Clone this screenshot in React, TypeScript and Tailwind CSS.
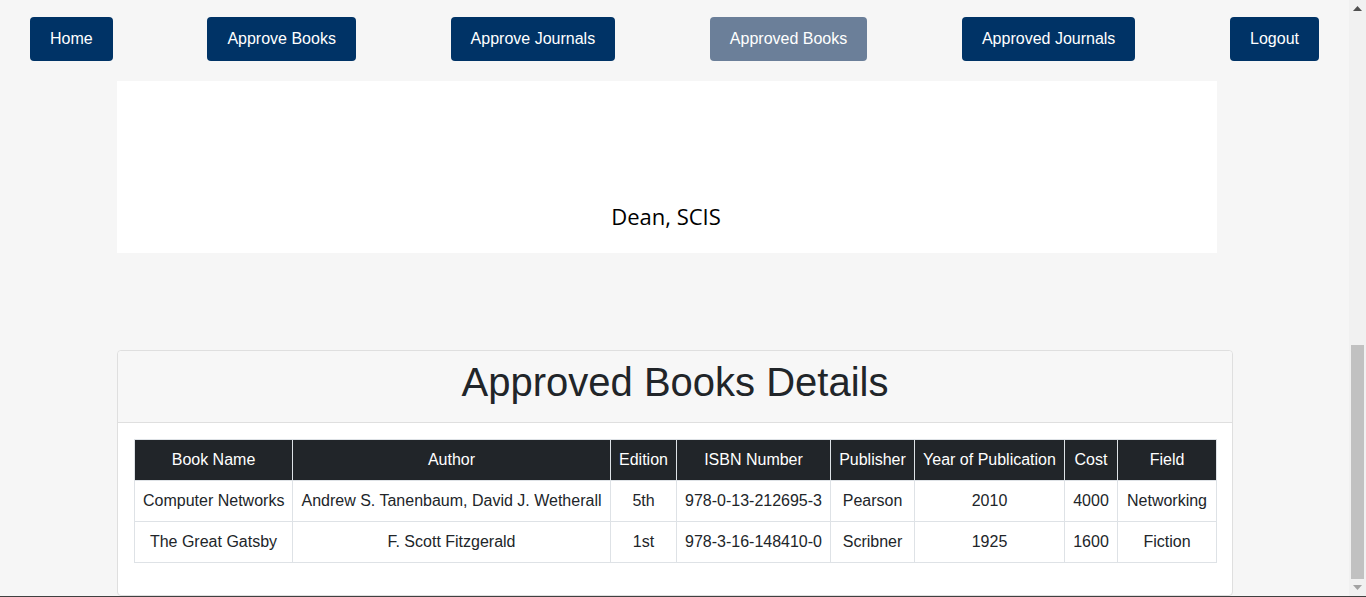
const navItems = [
  { label: 'Home', active: false },
  { label: 'Approve Books', active: false },
  { label: 'Approve Journals', active: false },
  { label: 'Approved Books', active: true },
  { label: 'Approved Journals', active: false },
  { label: 'Logout', active: false },
];

const columns = [
  { title: 'Book Name', width: 'w-[158px]' },
  { title: 'Author', width: 'w-[318px]' },
  { title: 'Edition', width: 'w-[66px]' },
  { title: 'ISBN Number', width: 'w-[154px]' },
  { title: 'Publisher', width: 'w-[84px]' },
  { title: 'Year of Publication', width: 'w-[150px]' },
  { title: 'Cost', width: 'w-[53px]' },
  { title: 'Field', width: 'w-[99px]' },
];

const books = [
  ['Computer Networks', 'Andrew S. Tanenbaum, David J. Wetherall', '5th', '978-0-13-212695-3', 'Pearson', '2010', '4000', 'Networking'],
  ['The Great Gatsby', 'F. Scott Fitzgerald', '1st', '978-3-16-148410-0', 'Scribner', '1925', '1600', 'Fiction'],
];

const Scrollbar = () => (
  <div className="w-[17px] h-full bg-[#f1f1f1] flex flex-col">
    <div className="h-[17px] flex items-center justify-center">
      <svg width="9" height="5" viewBox="0 0 9 5">
        <path d="M0 5 L4.5 0 L9 5 Z" fill="#505050" />
      </svg>
    </div>
    <div className="flex-1 flex flex-col justify-end px-[2px]">
      <div className="h-[234px] bg-[#c1c1c1]" />
    </div>
    <div className="h-[17px] flex items-center justify-center">
      <svg width="9" height="5" viewBox="0 0 9 5">
        <path d="M0 0 L9 0 L4.5 5 Z" fill="#a3a3a3" />
      </svg>
    </div>
  </div>
);

const App = () => {
  return (
    <div className="w-[1366px] h-[597px] flex flex-col overflow-hidden" style={{ fontFamily: '"Liberation Sans", Arial, sans-serif' }}>
      <div className="flex h-[596px]">
        <div className="w-[1349px] h-full bg-[#f6f6f6] overflow-hidden">
          {/* top navigation */}
          <nav className="flex justify-between px-[30px] pt-[17px] pb-[20px]">
            {navItems.map((item) => (
              <button
                key={item.label}
                className={`h-[44px] px-5 rounded-[4px] text-white text-[16px] leading-none ${
                  item.active ? 'bg-[#6b7f99]' : 'bg-[#003366]'
                }`}
              >
                {item.label}
              </button>
            ))}
          </nav>

          <div className="pl-[117px]">
            {/* signature panel */}
            <div className="w-[1100px] bg-white pt-[119px] pb-[21px] flex justify-center">
              <span className="text-[22px] leading-[32px] text-black pr-[2px]" style={{ fontFamily: '"Open Sans", sans-serif' }}>
                Dean, SCIS
              </span>
            </div>

            {/* approved books card */}
            <div className="mt-[97px] w-[1116px] border border-[#dfdfdf] rounded-[4px] bg-white">
              <div className="bg-[#f7f7f7] border-b border-[#dfdfdf] pt-[7px] pb-[16px] text-center rounded-t-[4px]">
                <h1 className="text-[40px] leading-[48px] text-[#212529]">Approved Books Details</h1>
              </div>
              <div className="p-4 pb-8">
                <table className="w-[1082px] table-fixed border-collapse text-[16px] leading-[24px] text-[#212529]">
                  <thead>
                    <tr>
                      {columns.map((col) => (
                        <th
                          key={col.title}
                          className={`${col.width} bg-[#212529] text-white font-normal p-2 border border-[#dee2e6] whitespace-nowrap`}
                        >
                          {col.title}
                        </th>
                      ))}
                    </tr>
                  </thead>
                  <tbody>
                    {books.map((row) => (
                      <tr key={row[0]}>
                        {row.map((cell, i) => (
                          <td key={i} className="p-2 border border-[#dee2e6] text-center whitespace-nowrap">
                            {cell}
                          </td>
                        ))}
                      </tr>
                    ))}
                  </tbody>
                </table>
              </div>
            </div>
          </div>
        </div>
        <Scrollbar />
      </div>
      <div className="h-px bg-[#404040]" />
    </div>
  );
};

export default App;
